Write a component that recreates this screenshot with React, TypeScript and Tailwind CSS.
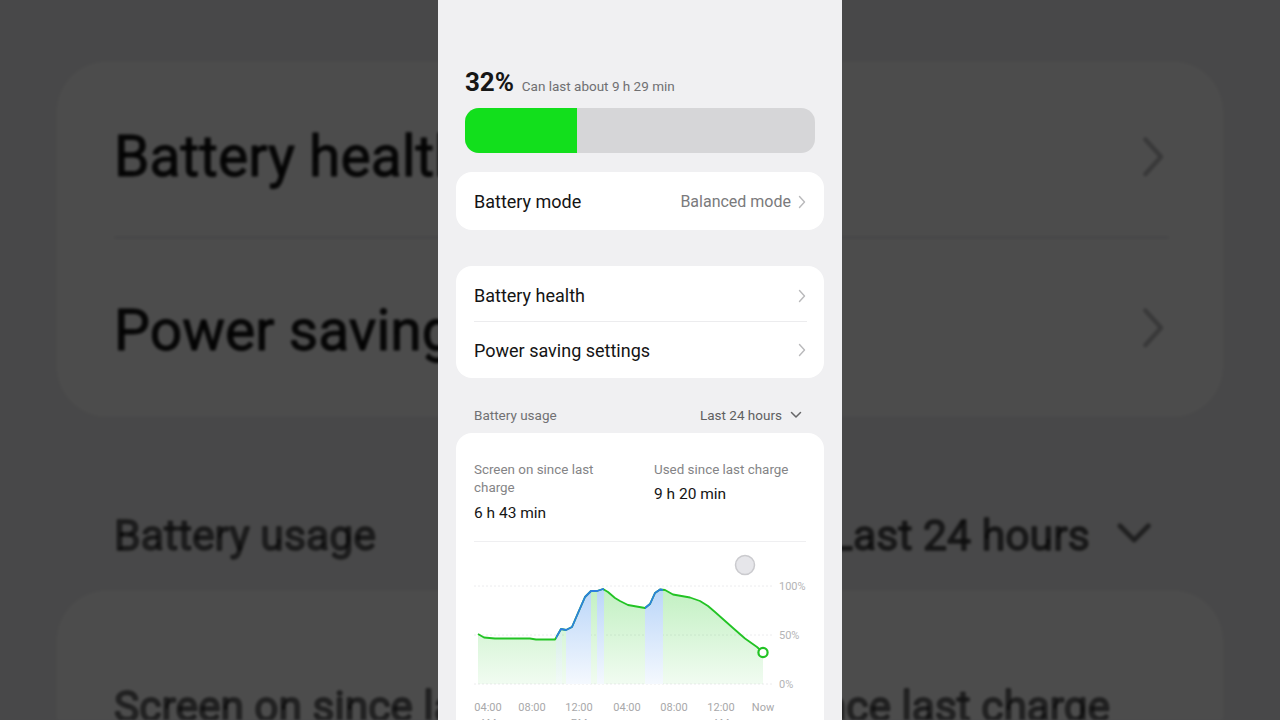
import React from 'react';

const pts: [number, number][] = [
  [478, 634], [484, 637.5], [495, 638.5], [530, 638.5], [536, 639.5], [555, 639.5],
  [561, 629], [566, 630], [572, 627], [578, 613], [585, 597], [591, 591], [597, 591],
  [603, 589], [608, 592], [615, 598], [620, 601], [628, 605], [645, 608], [650, 604],
  [655, 593], [660, 589.5], [665, 590], [673, 594.5], [690, 597.5], [700, 601],
  [708, 606], [715, 612], [724, 620], [733, 628], [745, 638.5], [757, 647], [763, 652.5],
];

const linePath = 'M' + pts.map(([x, y]) => `${x},${y}`).join(' L');
const areaPath = `M478,684 L${pts.map(([x, y]) => `${x},${y}`).join(' L')} L763,684 Z`;

// charging windows, drawn blue
const charging: [number, number, number][] = [
  [556, 562, 0.45],
  [566, 591, 1],
  [597, 604, 1],
  [645, 663, 1],
];

const xLabels: [number, string][] = [
  [488, '04:00'], [532, '08:00'], [579, '12:00'], [627, '04:00'],
  [674, '08:00'], [721, '12:00'], [763, 'Now'],
];

function ChevronRight() {
  return (
    <svg width="10" height="14" viewBox="0 0 10 14" fill="none">
      <path d="M2.5 1.5 L7.5 7 L2.5 12.5" stroke="#b9b9bb" strokeWidth="1.4" strokeLinecap="round" strokeLinejoin="round" />
    </svg>
  );
}

function UsageChart({ uid }: { uid: string }) {
  return (
    <svg width="332" height="180" viewBox="474 542 332 180" className="block">
      <defs>
        <linearGradient id={`${uid}-g`} x1="0" y1="586" x2="0" y2="684" gradientUnits="userSpaceOnUse">
          <stop offset="0" stopColor="#3ccf3c" stopOpacity="0.32" />
          <stop offset="1" stopColor="#3ccf3c" stopOpacity="0.07" />
        </linearGradient>
        <linearGradient id={`${uid}-b`} x1="0" y1="586" x2="0" y2="684" gradientUnits="userSpaceOnUse">
          <stop offset="0" stopColor="#4f95ee" stopOpacity="0.4" />
          <stop offset="1" stopColor="#4f95ee" stopOpacity="0.06" />
        </linearGradient>
        <clipPath id={`${uid}-area`}>
          <path d={areaPath} />
        </clipPath>
        <clipPath id={`${uid}-blue`}>
          <rect x="556" y="560" width="48" height="130" />
          <rect x="645" y="560" width="18" height="130" />
        </clipPath>
      </defs>

      {[586, 635, 684].map((y) => (
        <line key={y} x1="474" x2="772" y1={y} y2={y} stroke="#ececee" strokeWidth="1" strokeDasharray="2 2" />
      ))}

      <path d={areaPath} fill={`url(#${uid}-g)`} />
      <g clipPath={`url(#${uid}-area)`}>
        {charging.map(([a, b, o]) => (
          <rect key={a} x={a} y="560" width={b - a} height="130" fill="#ffffff" opacity={o} />
        ))}
        {charging.map(([a, b, o]) => (
          <rect key={`b${a}`} x={a} y="560" width={b - a} height="130" fill={`url(#${uid}-b)`} opacity={o} />
        ))}
      </g>

      <path d={linePath} fill="none" stroke="#22c324" strokeWidth="1.8" strokeLinejoin="round" />
      <path d={linePath} fill="none" stroke="#2c7fe0" strokeWidth="1.8" strokeLinejoin="round" clipPath={`url(#${uid}-blue)`} />
      <circle cx="763" cy="652.5" r="4.6" fill="#ffffff" stroke="#22c324" strokeWidth="2.2" />

      <circle cx="745" cy="565" r="9.5" fill="#e6e6ea" stroke="#cacace" strokeWidth="1.5" />

      {[[586, '100%'], [635, '50%'], [684, '0%']].map(([y, t]) => (
        <text key={t as string} x="779" y={(y as number) + 4} fontSize="11" fill="#b4b4b6" fontFamily="Roboto, sans-serif">
          {t}
        </text>
      ))}
      {xLabels.map(([x, t], i) => (
        <text key={i} x={x} y="711" fontSize="11" fill="#a8a8aa" textAnchor="middle" fontFamily="Roboto, sans-serif">
          {t}
        </text>
      ))}
      {[[488, 'AM'], [579, 'PM'], [721, 'AM']].map(([x, t], i) => (
        <text key={`s${i}`} x={x} y="727" fontSize="11" fill="#a8a8aa" textAnchor="middle" fontFamily="Roboto, sans-serif">
          {t}
        </text>
      ))}
    </svg>
  );
}

function PhoneScreen({ uid }: { uid: string }) {
  return (
    <div className="w-[404px] h-[720px] bg-[#f0f0f2] overflow-hidden font-['Roboto',sans-serif] text-[#141414]">
      <div className="pt-[67px]">
        <div className="flex items-baseline gap-[8px] px-[27px] leading-[30px]">
          <span className="text-[26px] font-bold tracking-[-0.1px] text-[#161616]">32%</span>
          <span className="text-[13.5px] text-[#6f6f71]">Can last about 9 h 29 min</span>
        </div>

        <div className="mx-[27px] mt-[7px] h-[45px] rounded-[14px] bg-[#d6d6d8] overflow-hidden">
          <div className="h-full w-[32%] bg-[#12df1c]" />
        </div>

        <div className="mx-[18px] mt-[19px] h-[58px] rounded-[16px] bg-white pl-[18px] pr-[17px] flex items-center justify-between">
          <span className="text-[18px]">Battery mode</span>
          <div className="flex items-center gap-[6px] pt-[1px]">
            <span className="text-[16px] text-[#7a7a7c]">Balanced mode</span>
            <ChevronRight />
          </div>
        </div>

        <div className="mx-[18px] mt-[36px] rounded-[16px] bg-white pl-[18px] pr-[17px]">
          <div className="h-[56px] pt-[4px] flex items-center justify-between border-b border-[#ececee]">
            <span className="text-[18px]">Battery health</span>
            <ChevronRight />
          </div>
          <div className="h-[56px] flex items-center justify-between">
            <span className="text-[18px]">Power saving settings</span>
            <ChevronRight />
          </div>
        </div>

        <div className="flex items-center justify-between pl-[36px] pr-[40px] pt-[28px] pb-[9px] leading-[18px]">
          <span className="text-[13.5px] text-[#717173]">Battery usage</span>
          <div className="flex items-center gap-[8px]">
            <span className="text-[13.5px] text-[#5f5f61]">Last 24 hours</span>
            <svg width="12" height="8" viewBox="0 0 12 8" fill="none">
              <path d="M1.5 1.5 L6 6 L10.5 1.5" stroke="#666668" strokeWidth="1.5" strokeLinecap="round" strokeLinejoin="round" />
            </svg>
          </div>
        </div>

        <div className="mx-[18px] rounded-[16px] bg-white px-[18px] pt-[28px] pb-[20px]">
          <div className="grid grid-cols-[152px_1fr] gap-x-[28px]">
            <div>
              <div className="text-[13.4px] leading-[18px] text-[#848486]">Screen on since last charge</div>
              <div className="mt-[6px] text-[15.5px] leading-[20px]">6 h 43 min</div>
            </div>
            <div>
              <div className="text-[13.4px] leading-[18px] text-[#848486]">Used since last charge</div>
              <div className="mt-[5px] text-[15.5px] leading-[20px]">9 h 20 min</div>
            </div>
          </div>
          <div className="mt-[18px] h-px bg-[#efeff1]" />
          <UsageChart uid={uid} />
        </div>
      </div>
    </div>
  );
}

export default function App() {
  return (
    <div className="relative w-[1280px] h-[720px] overflow-hidden bg-[#48484a]">
      {/* blurred, dimmed blow-up of the same screen behind */}
      <div className="absolute inset-0 overflow-hidden blur-[1.5px] brightness-[0.3] [-webkit-text-stroke:0.3px_#000]">
        <div className="absolute left-0 top-[-781px] origin-top-left scale-[3.168]">
          <PhoneScreen uid="bg" />
        </div>
      </div>
      <div className="relative mx-auto w-[404px] h-[720px]">
        <PhoneScreen uid="fg" />
      </div>
    </div>
  );
}
